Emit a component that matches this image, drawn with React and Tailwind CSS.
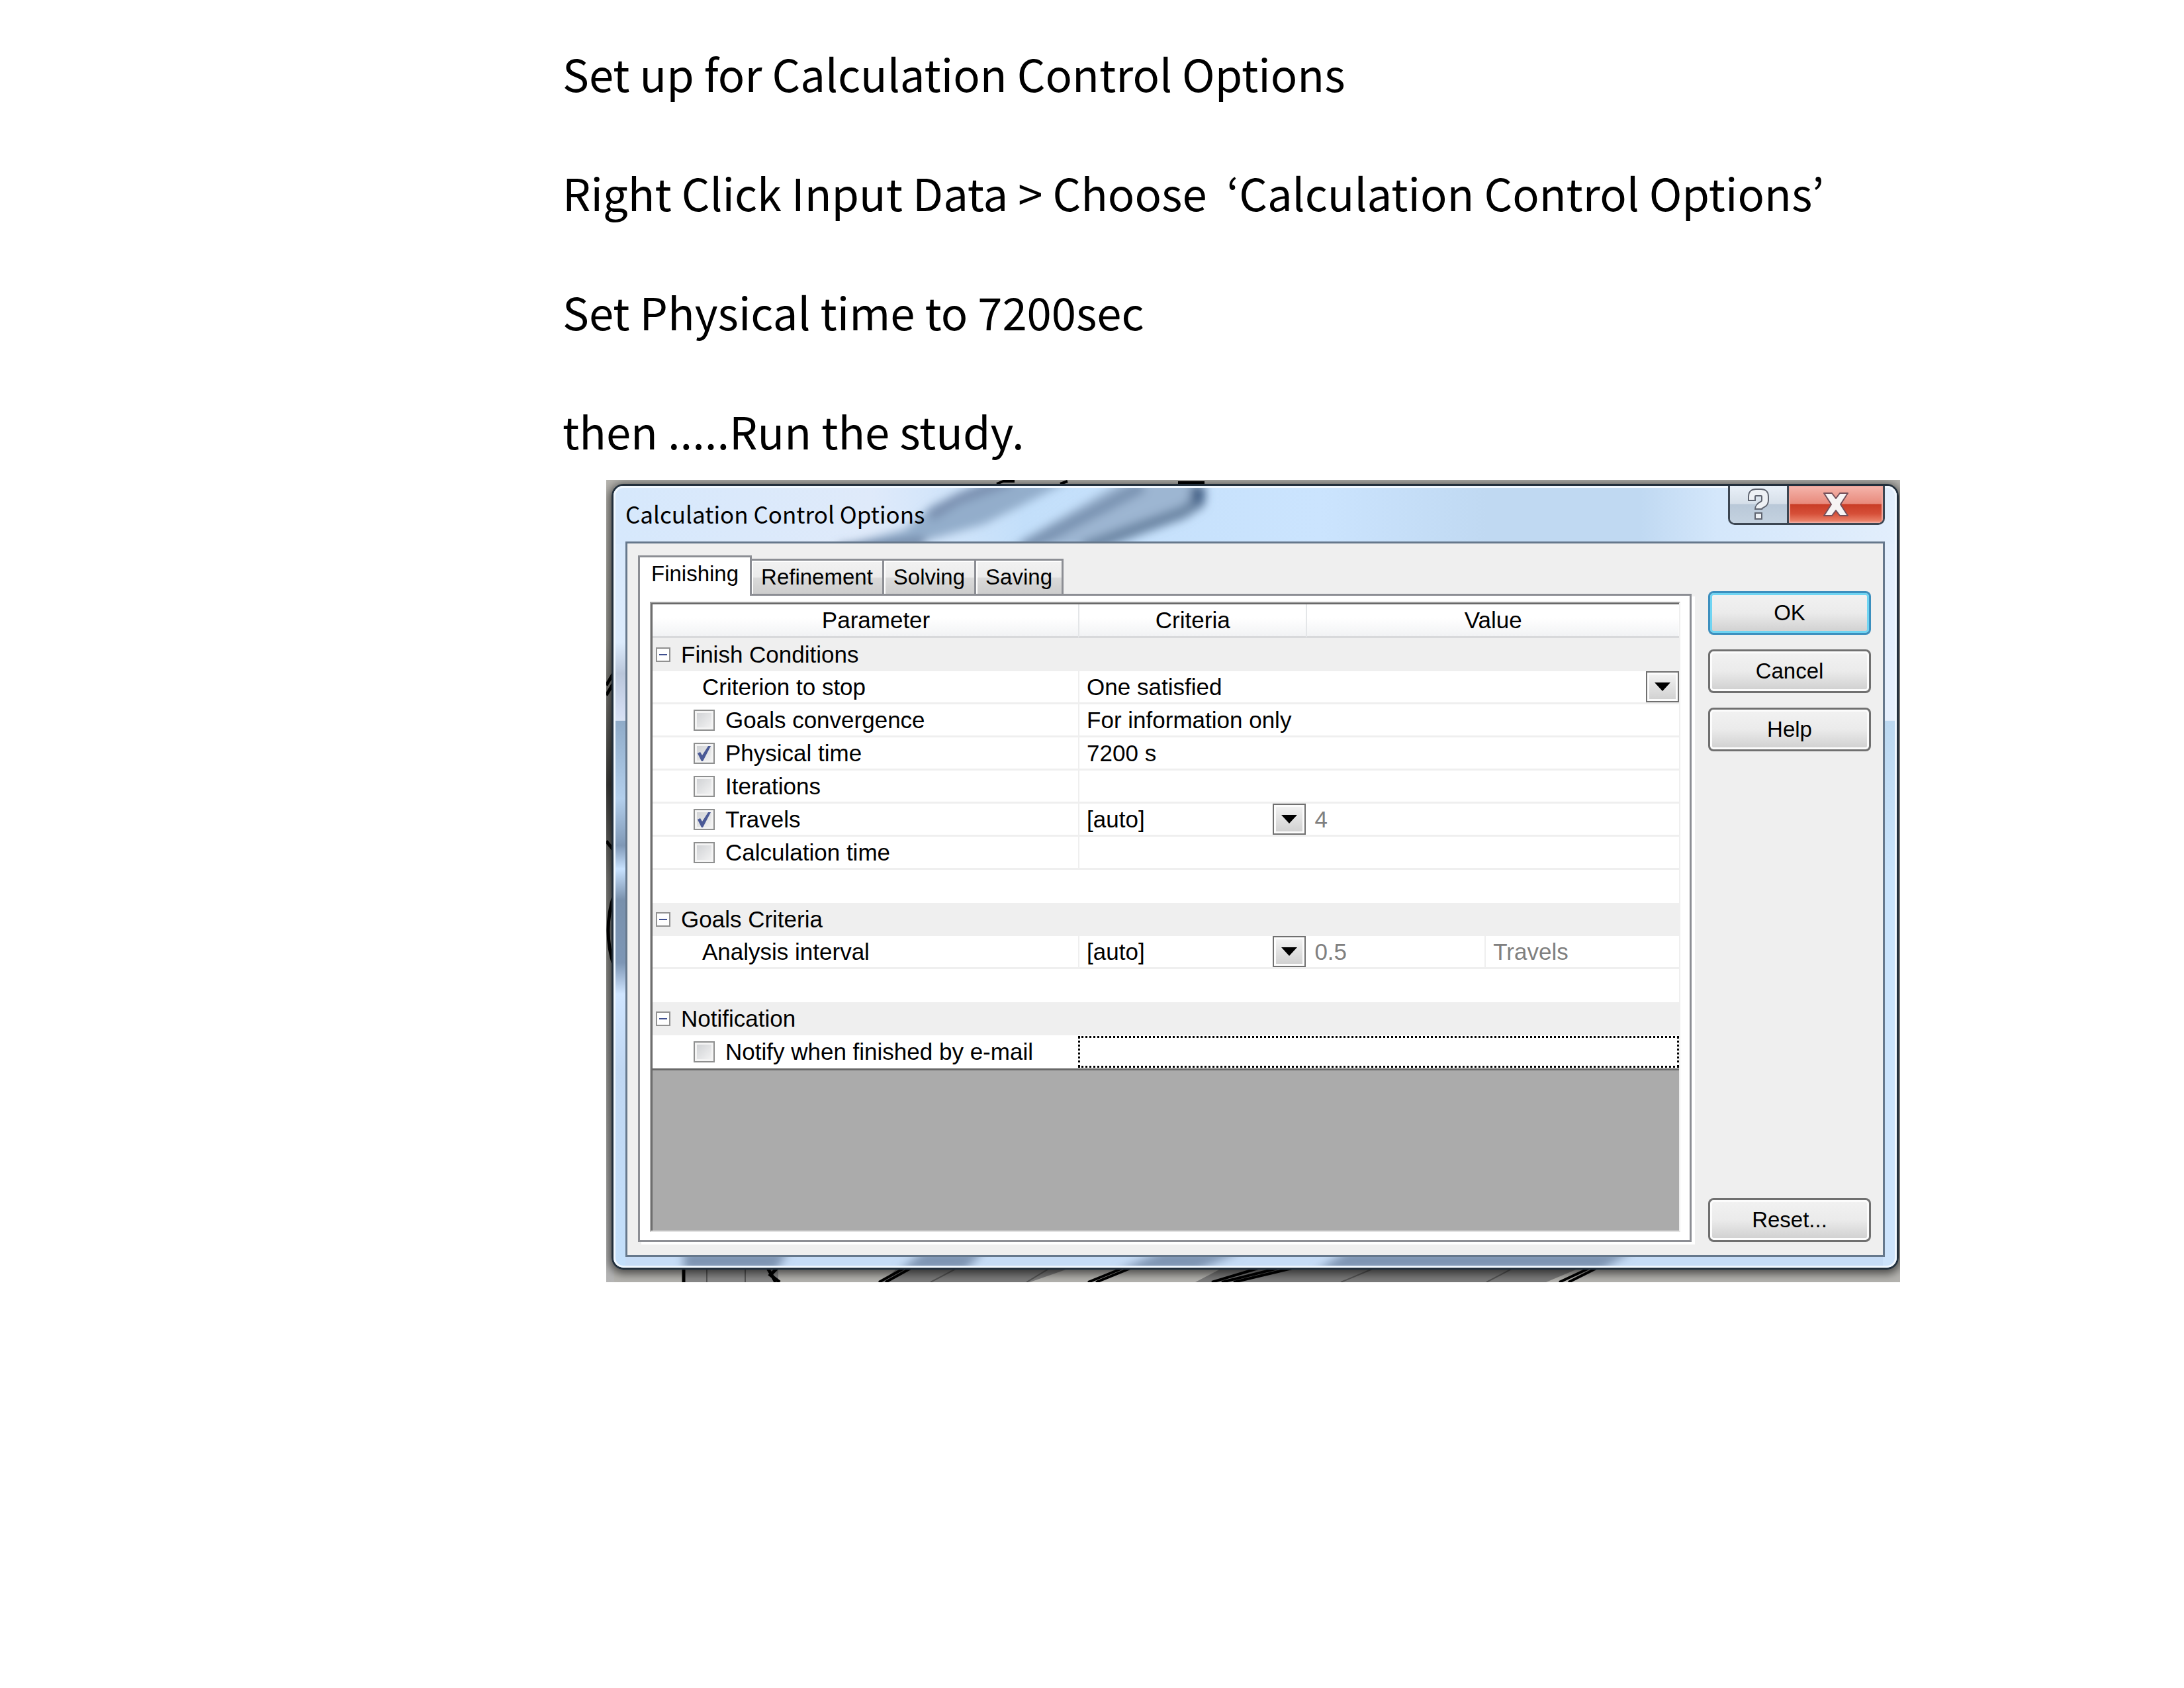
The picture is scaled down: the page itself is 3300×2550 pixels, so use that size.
import React, { useState } from "react";

const STEPS = [
    "Set up for Calculation Control Options",
    "Right Click Input Data > Choose  ‘Calculation Control Options’",
    "Set Physical time to 7200sec",
    "then .....Run the study.",
];

const TABS = ["Finishing", "Refinement", "Solving", "Saving"];

// Model lines that show around the edges of the window
const ModelBackdrop = () => (
    <svg
        className="absolute inset-0 w-full h-full"
        viewBox="0 0 1955 1211"
        preserveAspectRatio="none"
        aria-hidden="true"
    >
        <defs>
            <linearGradient id="edge" x1="0" y1="0" x2="0" y2="1">
                <stop offset="0" stopColor="#b5b3ae" />
                <stop offset="0.2" stopColor="#9a9993" />
                <stop offset="0.38" stopColor="#3c3c3a" />
                <stop offset="0.5" stopColor="#7d7d7a" />
                <stop offset="0.6" stopColor="#8d8d89" />
                <stop offset="1" stopColor="#b5b5b5" />
            </linearGradient>
        </defs>
        <rect width="1955" height="1211" fill="#b4b3af" />
        <rect width="12" height="1211" fill="url(#edge)" />
        <path d="M0 310 L12 290 M0 325 L12 305 M0 545 L12 560 M12 625 Q-6 680 12 735" stroke="#000" strokeWidth="5" fill="none" />
        <path d="M590 6 L600 2 H617 M686 6 L697 2 M864 4 H904" stroke="#000" strokeWidth="4" fill="none" />
        <rect x="115" y="1190" width="145" height="21" fill="#8a8a8a" />
        <path d="M440 1190 H700 L640 1211 H415 Z M930 1190 H1470 L1420 1211 H890 Z" fill="#7c7c7c" />
        <path d="M117 1190 V1211 M244 1190 L250 1200 L256 1211 M258 1190 L248 1200 L262 1211" stroke="#000" strokeWidth="5" fill="none" />
        <path
            d="M412 1211 L450 1190 M422 1211 L460 1190 M728 1211 L780 1190 M740 1211 L792 1190 M915 1211 L985 1190 M930 1211 L1015 1190 M948 1211 L1036 1190 M1440 1211 L1485 1190 M1454 1211 L1496 1190"
            stroke="#000"
            strokeWidth="4"
            fill="none"
        />
        <path d="M152 1190 V1211 M210 1190 V1211 M490 1211 L530 1190 M635 1211 L670 1190 M1110 1211 L1160 1190 M1330 1211 L1370 1190" stroke="#555" strokeWidth="2" fill="none" />
    </svg>
);

// Frosted glass of the window frame
const Glass = () => (
    <svg
        className="absolute inset-0 w-full h-full"
        viewBox="0 0 1939 1180"
        preserveAspectRatio="none"
        aria-hidden="true"
    >
        <defs>
            <linearGradient id="glassTop" x1="0" y1="0" x2="1" y2="0">
                <stop offset="0" stopColor="#d6e8fc" />
                <stop offset="0.2" stopColor="#dfeafa" />
                <stop offset="0.32" stopColor="#c3dffa" />
                <stop offset="0.55" stopColor="#cbe4fe" />
                <stop offset="0.68" stopColor="#c0d9f2" />
                <stop offset="0.8" stopColor="#c0d9f2" />
                <stop offset="0.86" stopColor="#d4e7fb" />
                <stop offset="1" stopColor="#e2eefc" />
            </linearGradient>
            <linearGradient id="glassLeft" x1="0" y1="0" x2="0" y2="1">
                <stop offset="0" stopColor="#d6e8fc" />
                <stop offset="0.2" stopColor="#dcebfc" />
                <stop offset="0.24" stopColor="#b9c6da" />
                <stop offset="0.29" stopColor="#d3ddf2" />
                <stop offset="0.3" stopColor="#d8e2f4" />
                <stop offset="0.301" stopColor="#8fabc8" />
                <stop offset="0.4" stopColor="#b3cfec" />
                <stop offset="0.46" stopColor="#7f98b6" />
                <stop offset="0.49" stopColor="#c8e2ff" />
                <stop offset="0.53" stopColor="#7890ac" />
                <stop offset="0.61" stopColor="#7d96b5" />
                <stop offset="0.65" stopColor="#cfe5ff" />
                <stop offset="0.75" stopColor="#c0d7f2" />
                <stop offset="1" stopColor="#c4e0fb" />
            </linearGradient>
            <linearGradient id="glassRight" x1="0" y1="0" x2="0" y2="1">
                <stop offset="0" stopColor="#e2eefc" />
                <stop offset="0.3" stopColor="#e6effc" />
                <stop offset="0.301" stopColor="#bcd8f0" />
                <stop offset="0.5" stopColor="#c9e3fb" />
                <stop offset="1" stopColor="#cde3fb" />
            </linearGradient>
            <filter id="soft" x="-10%" y="-50%" width="120%" height="200%">
                <feGaussianBlur stdDeviation="7" />
            </filter>
        </defs>
        <rect width="20" height="1180" fill="url(#glassLeft)" />
        <rect x="1915" width="24" height="1180" fill="url(#glassRight)" />
        <rect width="1939" height="88" fill="url(#glassTop)" />
        <rect x="18" y="1160" width="1900" height="20" fill="#c6dcf6" />
        <svg width="1939" height="88">
            <g filter="url(#soft)">
                <path d="M340 92 L440 66 L480 30 L560 -8 H690 L560 58 L440 92 Z" fill="#93adcb" />
                <path d="M478 46 L520 20 L600 -8" stroke="#7a90b0" strokeWidth="16" fill="none" />
                <path d="M340 96 L470 84" stroke="#6f86a6" strokeWidth="14" fill="none" />
                <path d="M600 92 L770 -8 H895 L892 28 L740 92 Z" fill="#9db6d2" />
                <path d="M620 94 L800 0" stroke="#7c94b3" strokeWidth="20" fill="none" />
                <path d="M710 94 L860 40 L888 22" stroke="#6e88a6" strokeWidth="20" fill="none" />
                <path d="M872 0 H894 V26 H872 Z" fill="#47658a" />
            </g>
        </svg>
        <svg y="1160" width="1939" height="20">
            <g filter="url(#soft)">
                <path d="M106 -5 H265 L245 25 H106 Z M470 -5 H560 L530 25 H430 Z M830 -5 H950 L880 25 H760 Z M1110 -5 H1540 L1490 25 H1060 Z" fill="#7e94b2" />
            </g>
        </svg>
    </svg>
);

const HelpIcon = () => (
    <svg width="34" height="48" viewBox="0 0 34 48" fill="none" aria-hidden="true">
        <path d="M7 19 V12 Q7 6 13 6 H21 Q27 6 27 12 V18 Q27 22 23 24 Q17 27 17 32" stroke="#5f6470" strokeWidth="12" />
        <rect x="11" y="36" width="12" height="11" fill="#5f6470" />
        <path d="M7 17 V12 Q7 6 13 6 H21 Q27 6 27 12 V18 Q27 22 23 24 Q17 27 17 30" stroke="#eef1f5" strokeWidth="8" />
        <rect x="13" y="38" width="8" height="7" fill="#eef1f5" />
    </svg>
);

const CloseIcon = () => (
    <svg width="40" height="38" viewBox="0 0 40 38" aria-hidden="true">
        <path
            d="M2 2 H14 L20 10 L26 2 H38 L27 19 L38 36 H26 L20 28 L14 36 H2 L13 19 Z"
            fill="#f6f4f4"
            stroke="#74505a"
            strokeWidth="2"
            strokeLinejoin="round"
        />
    </svg>
);

const ArrowBox = () => (
    <span className="flex h-[47px] w-[50px] shrink-0 items-center justify-center border-2 border-[#707070] bg-linear-to-b from-[#f4f4f4] to-[#cfcfcf] shadow-[inset_0_0_0_3px_#fcfcfc] pointer-events-none">
        <svg width="24" height="13" viewBox="0 0 24 13" aria-hidden="true">
            <path d="M0 0 H24 L12 13 Z" fill="#000" />
        </svg>
    </span>
);

const Dropdown = ({ label, value }) => (
    <div className="flex items-center">
        <select aria-label={label} defaultValue={value} className="min-w-0 flex-1 appearance-none bg-transparent pl-[11px] outline-none">
            <option>{value}</option>
        </select>
        <ArrowBox />
    </div>
);

const CheckRow = ({ label, checked, onChange }) => (
    <label className="flex items-center gap-4 pl-[30px]">
        <span className="grid size-8 shrink-0 place-items-center">
            <input
                type="checkbox"
                checked={checked}
                onChange={onChange}
                className="col-start-1 row-start-1 size-8 appearance-none border-2 border-[#8e8f8f] bg-linear-to-br from-[#cdcfd2] to-[#f6f6f6] shadow-[inset_0_0_0_3px_#f4f4f4]"
            />
            {checked && (
                <svg className="pointer-events-none col-start-1 row-start-1" width="20" height="24" viewBox="0 0 20 24" aria-hidden="true">
                    <path d="M0 12 L4 10 L7 15 L16 1 H20 L8 24 H6 Z" fill="#4b5a96" />
                </svg>
            )}
        </span>
        <span>{label}</span>
    </label>
);

const GroupRow = ({ title }) => (
    <tr className="h-[50px] bg-[#efefef]">
        <td className="p-0">
            <button aria-label={`Collapse ${title}`} className="ml-[5px] flex size-[22px] items-center justify-center border-2 border-[#919191] bg-white">
                <span className="h-[2px] w-3 bg-[#3f4f8f]" />
            </button>
        </td>
        <td colSpan={4} className="p-0 pl-[11px]">{title}</td>
    </tr>
);

const BlankRow = () => (
    <tr className="h-[50px]">
        <td colSpan={5} className="p-0" />
    </tr>
);

const line = "p-0 border-b-3 border-[#efefef]";
const cell = "p-0 border-b-3 border-l-2 border-[#efefef]";

const ParameterTable = () => {
    const [checks, setChecks] = useState({
        goals: false,
        physical: true,
        iterations: false,
        travels: true,
        calculation: false,
        notify: false,
    });

    const toggle = (key) => () => setChecks({ ...checks, [key]: !checks[key] });

    return (
        <table className="w-full table-fixed border-separate border-spacing-0 border-b-3 border-[#696969] bg-white text-[35px] leading-[44px]">
            <colgroup>
                <col className="w-[32px]" />
                <col className="w-[39.4%]" />
                <col className="w-[22.2%]" />
                <col className="w-[17.4%]" />
                <col />
            </colgroup>
            <thead>
                <tr className="h-[51px] bg-linear-to-b from-white from-40% to-[#f0f1f3]">
                    <td className="p-0 border-b-3 border-[#d8d9db]" />
                    <th className="p-0 font-normal border-b-3 border-[#d8d9db]">Parameter</th>
                    <th className="p-0 font-normal border-b-3 border-l-2 border-b-[#d8d9db] border-l-[#e4e6e8]">Criteria</th>
                    <th colSpan={2} className="p-0 font-normal border-b-3 border-l-2 border-b-[#d8d9db] border-l-[#e4e6e8]">Value</th>
                </tr>
            </thead>
            <tbody>
                <GroupRow title="Finish Conditions" />
                <tr className="h-[50px]">
                    <td className={line} />
                    <td className={`${line} pl-[43px]`}>Criterion to stop</td>
                    <td colSpan={3} className={cell}>
                        <Dropdown label="Criterion to stop" value="One satisfied" />
                    </td>
                </tr>
                <tr className="h-[50px]">
                    <td className={line} />
                    <td className={line}>
                        <CheckRow label="Goals convergence" checked={checks.goals} onChange={toggle("goals")} />
                    </td>
                    <td colSpan={3} className={`${cell} pl-[11px]`}>For information only</td>
                </tr>
                <tr className="h-[50px]">
                    <td className={line} />
                    <td className={line}>
                        <CheckRow label="Physical time" checked={checks.physical} onChange={toggle("physical")} />
                    </td>
                    <td colSpan={3} className={`${cell} pl-[11px]`}>7200 s</td>
                </tr>
                <tr className="h-[50px]">
                    <td className={line} />
                    <td className={line}>
                        <CheckRow label="Iterations" checked={checks.iterations} onChange={toggle("iterations")} />
                    </td>
                    <td colSpan={3} className={cell} />
                </tr>
                <tr className="h-[50px]">
                    <td className={line} />
                    <td className={line}>
                        <CheckRow label="Travels" checked={checks.travels} onChange={toggle("travels")} />
                    </td>
                    <td className={cell}>
                        <Dropdown label="Travels" value="[auto]" />
                    </td>
                    <td colSpan={2} className={`${line} pl-[13px] text-[#808080]`}>4</td>
                </tr>
                <tr className="h-[50px]">
                    <td className={line} />
                    <td className={line}>
                        <CheckRow label="Calculation time" checked={checks.calculation} onChange={toggle("calculation")} />
                    </td>
                    <td colSpan={3} className={cell} />
                </tr>
                <BlankRow />
                <GroupRow title="Goals Criteria" />
                <tr className="h-[50px]">
                    <td className={line} />
                    <td className={`${line} pl-[43px]`}>Analysis interval</td>
                    <td className={cell}>
                        <Dropdown label="Analysis interval" value="[auto]" />
                    </td>
                    <td className={`${line} pl-[13px] text-[#808080]`}>0.5</td>
                    <td className={`${cell} pl-[11px] text-[#808080]`}>Travels</td>
                </tr>
                <BlankRow />
                <GroupRow title="Notification" />
                <tr className="h-[50px]">
                    <td className="p-0" />
                    <td className="p-0">
                        <CheckRow label="Notify when finished by e-mail" checked={checks.notify} onChange={toggle("notify")} />
                    </td>
                    <td colSpan={3} className="p-0">
                        <input
                            type="text"
                            aria-label="E-mail address"
                            className="block h-[48px] w-full border-3 border-dotted border-black bg-white px-2 outline-none"
                        />
                    </td>
                </tr>
            </tbody>
        </table>
    );
};

const DialogButton = ({ children, primary }) => (
    <button
        className={`h-[66px] w-full rounded-[8px] border-3 text-[33px] bg-linear-to-b from-[#f2f2f2] from-0% via-[#ebebeb] via-50% to-[#cfcfcf] to-100% ${
            primary
                ? "border-[#3c8fbe] shadow-[inset_0_0_0_3px_#6fd4f2]"
                : "border-[#707070] shadow-[inset_0_0_0_3px_#fcfcfc]"
        }`}
    >
        {children}
    </button>
);

const CalculationDialog = () => {
    const [tab, setTab] = useState("Finishing");

    return (
        <section
            aria-label="Calculation Control Options"
            className="relative overflow-hidden rounded-[18px] border-3 border-[#222f3c] px-[18px] pb-4 font-['Liberation_Sans',Arial,sans-serif] text-black"
        >
            <Glass />
            <div className="pointer-events-none absolute inset-0 rounded-[15px] border-3 border-[#f1f8ff]" />

            <header className="relative flex h-[84px] items-start justify-between">
                <h2 className="self-center font-['Noto_Sans_CJK_KR','Open_Sans',sans-serif] text-[35px] leading-[48px]">
                    Calculation Control Options
                </h2>
                <div className="flex h-[59px] w-[237px] overflow-hidden rounded-b-[10px] border-3 border-t-0 border-[#3c4652]">
                    <button
                        aria-label="Help"
                        className="flex w-[89px] items-center justify-center border-r-3 border-[#3c4652] bg-[linear-gradient(#e9f0f8,#d6dfe9_48%,#b9c8d8_50%,#c4d2e0)]"
                    >
                        <HelpIcon />
                    </button>
                    <button
                        aria-label="Close"
                        className="flex flex-1 items-center justify-center bg-[linear-gradient(#f5b5ac,#e88a7c_48%,#c93c26_50%,#d64f38_75%,#ee8d74)] shadow-[inset_0_0_0_2px_#f0a99f]"
                    >
                        <CloseIcon />
                    </button>
                </div>
            </header>

            <div className="relative flex gap-[25px] border-3 border-[#66788c] bg-[#efefef] pt-[18px] pr-[18px] pb-5 pl-4">
                <div className="flex min-w-0 flex-1 flex-col">
                    <div role="tablist" className="flex h-[58px] items-end text-[33px] leading-[40px]">
                        {TABS.map((name) => (
                            <button
                                key={name}
                                role="tab"
                                aria-selected={tab === name}
                                onClick={() => setTab(name)}
                                className={
                                    tab === name
                                        ? "relative z-10 -mb-[3px] h-[61px] border-3 border-b-0 border-[#8c8e94] bg-white px-[17px] pb-2"
                                        : "h-[53px] border-t-3 border-r-3 border-[#8c8e94] bg-[linear-gradient(#f2f2f2,#ebebeb_50%,#dadada_52%,#cdcdcd)] px-[14px] shadow-[inset_2px_2px_0_#fff]"
                                }
                            >
                                {name}
                            </button>
                        ))}
                    </div>
                    <div role="tabpanel" className="flex-1 border-3 border-[#8c8e94] bg-white pt-[9px] pr-[14px] pb-3 pl-[15px] shadow-[5px_4px_0_#fff]">
                        <div className="border-2 border-t-[#a0a0a0] border-l-[#a0a0a0] border-r-[#efefef] border-b-[#e3e3e3]">
                            <div className="border-t-2 border-l-2 border-[#696969] bg-[#ababab] pb-[242px]">
                                <ParameterTable />
                            </div>
                        </div>
                    </div>
                </div>

                <div className="flex w-[246px] flex-col gap-[22px] pt-[54px]">
                    <DialogButton primary>OK</DialogButton>
                    <DialogButton>Cancel</DialogButton>
                    <DialogButton>Help</DialogButton>
                    <div className="mt-auto">
                        <DialogButton>Reset...</DialogButton>
                    </div>
                </div>
            </div>
        </section>
    );
};

const App = () => (
    <main className="min-h-screen bg-white pt-[62px] pr-[429px] pl-[850px]">
        <div className="flex flex-col gap-[84px] font-['Noto_Sans_CJK_KR','Open_Sans',sans-serif] text-[67px] leading-[96px] whitespace-pre text-black">
            {STEPS.map((step) => (
                <p key={step}>{step}</p>
            ))}
        </div>
        <div className="relative mt-[27px] ml-[66px] overflow-hidden pt-[6px] pr-[2px] pb-[19px] pl-2">
            <ModelBackdrop />
            <div className="relative rounded-[18px] shadow-[0_3px_14px_3px_rgba(0,0,0,0.6)]">
                <CalculationDialog />
            </div>
        </div>
    </main>
);

export default App;
